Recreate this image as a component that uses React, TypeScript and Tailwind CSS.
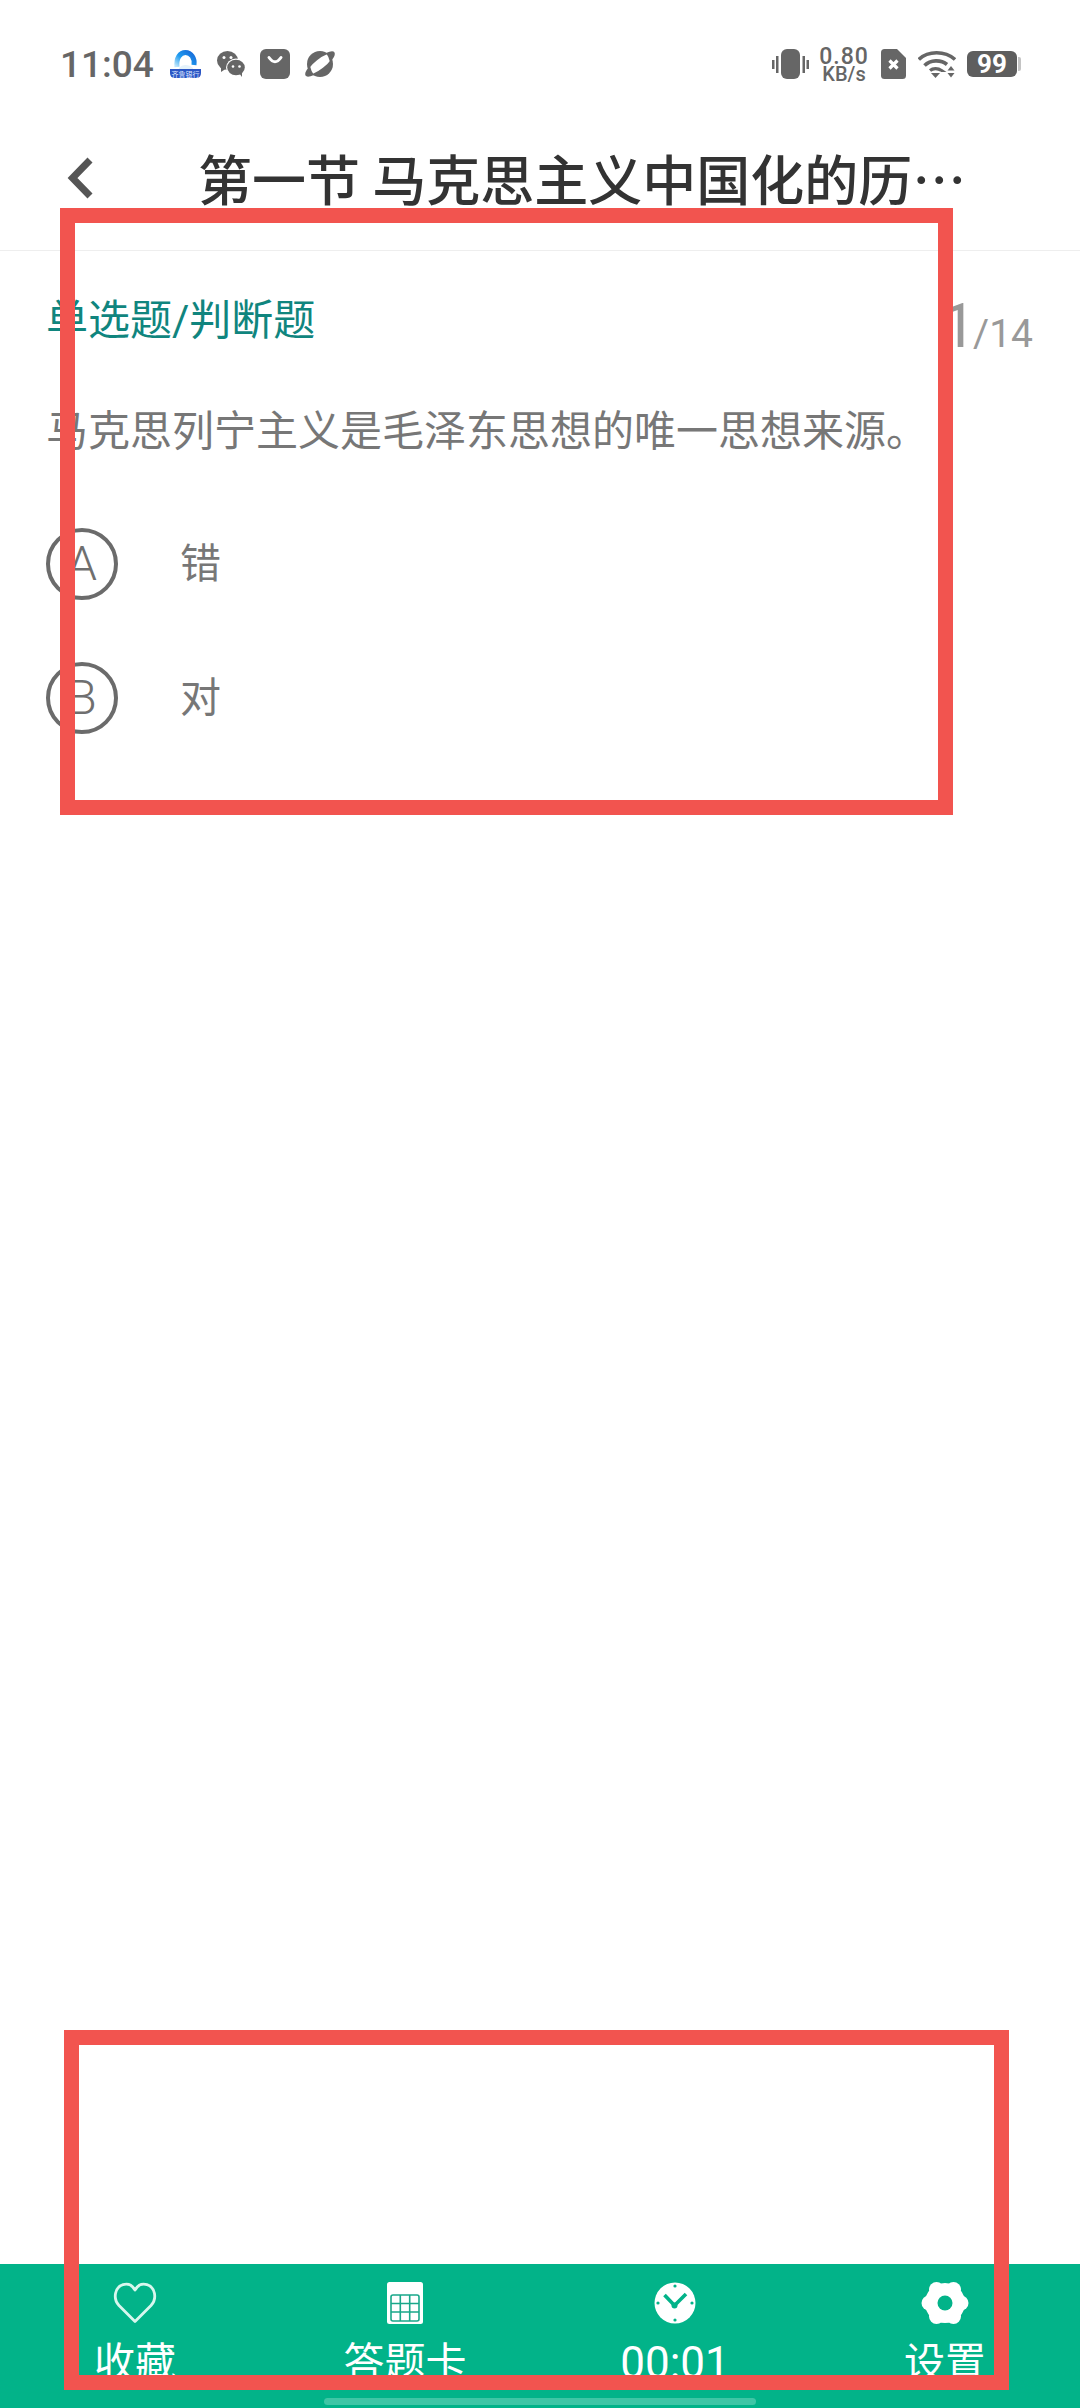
import React from "react";

function Option({ letter, text }: { letter: string; text: string }) {
  return (
    <div className="flex items-center h-[72px]">
      <div className="w-[72px] h-[72px] rounded-full border-[4.5px] border-[#6b6b6b] flex items-center justify-center text-[48px] font-light text-[#6f6f6f] font-['Roboto',sans-serif]">
        {letter}
      </div>
      <div className="ml-[62px] text-[41px] leading-[56px] text-[#777]">{text}</div>
    </div>
  );
}

function BlueIcon() {
  return (
    <svg width="31" height="28" viewBox="0 0 31 28">
      <defs>
        <linearGradient id="arc" x1="0" y1="1" x2="1" y2="0">
          <stop offset="0" stopColor="#bfe6fb" />
          <stop offset="0.45" stopColor="#1f9bef" />
          <stop offset="1" stopColor="#1668d8" />
        </linearGradient>
      </defs>
      <path d="M7 17 C6 8 10 2.5 15.5 2.5 C21 2.5 25 8 24 15" fill="none" stroke="url(#arc)" strokeWidth="5" />
      <path d="M9 18 C12 14 19 14 23 18 L23 20 L9 20Z" fill="#e4f2fb" />
      <path d="M0 19 H31 V23 Q31 28 26 28 H5 Q0 28 0 23Z" fill="#2a55c4" />
      <text x="15.5" y="26.5" textAnchor="middle" fontSize="7" fill="#dfe8ff" fontFamily="'Noto Sans CJK SC',sans-serif">齐鲁银行</text>
    </svg>
  );
}

function WeChatIcon() {
  return (
    <svg width="28" height="26" viewBox="0 0 28 26" fill="#666">
      <ellipse cx="10.5" cy="9.5" rx="10.5" ry="9.5" />
      <path d="M4 15 L4 21 L10 17Z" />
      <ellipse cx="19" cy="16.5" rx="10" ry="9" fill="#fff" />
      <ellipse cx="19" cy="16.5" rx="8.8" ry="7.8" />
      <path d="M22 22 L25 26 L25 20Z" />
      <circle cx="7" cy="6.5" r="1.5" fill="#fff" />
      <circle cx="14" cy="6.5" r="1.5" fill="#fff" />
      <circle cx="16" cy="15.5" r="1.3" fill="#fff" />
      <circle cx="22.5" cy="15.5" r="1.3" fill="#fff" />
    </svg>
  );
}

function BagIcon() {
  return (
    <svg width="30" height="30" viewBox="0 0 30 30">
      <rect width="30" height="30" rx="6" fill="#666" />
      <path d="M9 8.5 Q15 17 21 8.5" fill="none" stroke="#fff" strokeWidth="3" strokeLinecap="round" />
    </svg>
  );
}

function PlanetIcon() {
  return (
    <svg width="30" height="28" viewBox="0 0 30 28">
      <circle cx="15" cy="14" r="13" fill="#666" />
      <ellipse cx="15" cy="14" rx="15.5" ry="4.8" fill="#fff" transform="rotate(-38 15 14)" />
      <path d="M21 3 Q28 0 29.5 2.5 Q31 6 25 12 Q24 7 21 3Z" fill="#666" />
      <path d="M9 25 Q2 28 0.5 25.5 Q-1 22 5 16 Q6 21 9 25Z" fill="#666" />
    </svg>
  );
}

function VibrateIcon() {
  return (
    <svg width="37" height="30" viewBox="0 0 37 30" fill="#666">
      <rect x="9" y="0" width="19" height="30" rx="6" />
      <rect x="0" y="11" width="2.5" height="9" />
      <rect x="4" y="7" width="2.5" height="17" />
      <rect x="30.5" y="7" width="2.5" height="17" />
      <rect x="34.5" y="11" width="2.5" height="9" />
    </svg>
  );
}

function SimIcon() {
  return (
    <svg width="25" height="30" viewBox="0 0 25 30">
      <path d="M3.5 0 H16 L25 9 V26.5 Q25 30 21.5 30 H3.5 Q0 30 0 26.5 V3.5 Q0 0 3.5 0Z" fill="#666" />
      <path d="M8.5 11.5 L16.5 19.5 M16.5 11.5 L8.5 19.5" stroke="#fff" strokeWidth="3.2" />
    </svg>
  );
}

function WifiIcon() {
  return (
    <svg width="38" height="28" viewBox="0 0 38 28" fill="none">
      <path d="M0.8 9.5 C10 0.5 27 0.5 37 9.5" stroke="#666" strokeWidth="3.6" />
      <path d="M6.5 15.5 C12.5 9.5 23 9.5 29 14.5" stroke="#666" strokeWidth="3.6" />
      <path d="M12 20.5 C15 18 20 18 23.5 20.5 L23 20.5" stroke="#666" strokeWidth="3.2" />
      <path d="M13 23 H22 L17.5 28Z" fill="#666" />
      <path d="M33 16 L36.5 20.5 H29.5Z" fill="#666" />
      <path d="M29.5 23 H36.5 L33 27.5Z" fill="#666" />
    </svg>
  );
}

function HeartIcon() {
  return (
    <svg width="44" height="42" viewBox="0 0 44 42" fill="none">
      <path
        d="M22 39.5 L6 23.5 C-0.5 16.5 2 5 10 2.7 C15 1.3 19.5 3.5 22 8 C24.5 3.5 29 1.3 34 2.7 C42 5 44.5 16.5 38 23.5 Z"
        stroke="#d8f7ee"
        strokeWidth="2.8"
        strokeLinejoin="round"
      />
    </svg>
  );
}

function TableIcon() {
  return (
    <svg width="36" height="42" viewBox="0 0 36 42" fill="none">
      <rect width="36" height="42" rx="2.5" fill="#fff" />
      <rect x="4" y="13" width="28" height="26" rx="2" stroke="#1aa88a" strokeWidth="1.6" />
      <path d="M13.3 13 V39 M22.7 13 V39 M4 21.5 H32 M4 30 H32" stroke="#1aa88a" strokeWidth="1.6" />
    </svg>
  );
}

function ClockIcon() {
  return (
    <svg width="42" height="42" viewBox="0 0 42 42">
      <circle cx="21" cy="21" r="20.5" fill="#fff" />
      <path d="M10.5 13 L20.5 23.5 L32 12" fill="none" stroke="#02b389" strokeWidth="3.6" />
      <circle cx="20.5" cy="23.5" r="3" fill="#02b389" />
      <circle cx="21" cy="4" r="1.6" fill="#02b389" />
      <circle cx="21" cy="38" r="1.6" fill="#02b389" />
      <circle cx="4" cy="21" r="1.6" fill="#02b389" />
      <circle cx="38" cy="21" r="1.6" fill="#02b389" />
    </svg>
  );
}

function GearIcon() {
  return (
    <svg width="48" height="46" viewBox="0 0 48 46">
      <g fill="#fff">
        <circle cx="24" cy="23" r="20" />
        <circle cx="40" cy="23" r="7.5" />
        <circle cx="8" cy="23" r="7.5" />
        <circle cx="32.5" cy="9.5" r="7.5" />
        <circle cx="15.5" cy="9.5" r="7.5" />
        <circle cx="32.5" cy="36.5" r="7.5" />
        <circle cx="15.5" cy="36.5" r="7.5" />
      </g>
      <circle cx="24" cy="23" r="7.5" fill="#02b389" />
    </svg>
  );
}

function BarItem({ icon, label, labelClass }: { icon: React.ReactNode; label: string; labelClass?: string }) {
  return (
    <div className="w-[160px] flex flex-col items-center">
      <div className="h-[46px] flex items-center justify-center">{icon}</div>
      <div className={"mt-[13px] leading-[48px] text-white whitespace-nowrap " + (labelClass ?? "text-[41px]")}>{label}</div>
    </div>
  );
}

export default function App() {
  return (
    <div className="relative w-[1080px] h-[2408px] bg-white overflow-hidden flex flex-col font-['Roboto','Noto_Sans_CJK_SC',sans-serif]">
      <div className="h-[100px] shrink-0 pt-[28px] pl-[60px] pr-[63px] flex items-center">
        <div className="text-[37px] leading-none font-medium text-[#666] w-[92px] whitespace-nowrap">11:04</div>
        <div className="ml-[18px] flex items-center"><BlueIcon /></div>
        <div className="ml-[16px] flex items-center"><WeChatIcon /></div>
        <div className="ml-[15px] flex items-center"><BagIcon /></div>
        <div className="ml-[15px] flex items-center"><PlanetIcon /></div>
        <div className="ml-auto flex items-center"><VibrateIcon /></div>
        <div className="ml-[10px] w-[50px] flex flex-col items-center text-[#666] font-medium">
          <div className="text-[23px] leading-[20px] tracking-[1px]">0.80</div>
          <div className="text-[20px] leading-[15px]">KB/s</div>
        </div>
        <div className="ml-[12px] flex items-center"><SimIcon /></div>
        <div className="ml-[12px] flex items-center"><WifiIcon /></div>
        <div className="ml-[11px] relative w-[50px] h-[26px] rounded-[6px] bg-[#5e5e5e] flex items-center justify-center text-white text-[26px] font-bold leading-none">
          99
          <div className="absolute right-[-4px] top-[6px] w-[3px] h-[14px] rounded-r-[2px] bg-[#c4c4c4]" />
        </div>
      </div>

      <div className="h-[151px] shrink-0 border-b border-[#eeeeee] pt-[56px] pb-[50px] pl-[66px] flex items-center">
        <svg width="28" height="42" viewBox="0 0 28 42" fill="none" className="shrink-0">
          <path d="M24 3 L6.5 21 L24 39" stroke="#555" strokeWidth="7" />
        </svg>
        <div className="ml-[104px] text-[54px] leading-[60px] font-medium text-[#333] whitespace-nowrap font-['Noto_Sans_CJK_SC',sans-serif]">
          第一节 马克思主义中国化的历…
        </div>
      </div>

      <div className="flex-1 pl-[46px] pr-[47px]">
        <div className="flex justify-between items-start pt-[42px]">
          <div className="text-[42px] leading-[56px] text-[#10857e]">单选题/判断题</div>
          <div className="flex items-baseline text-[#999] leading-none pt-[2px]">
            <span className="text-[62px]">1</span>
            <span className="text-[39px] -ml-[3px]">/14</span>
          </div>
        </div>
        <div className="mt-[47px] text-[42px] leading-[56px] text-[#777] whitespace-nowrap">
          马克思列宁主义是毛泽东思想的唯一思想来源。
        </div>
        <div className="mt-[68px] flex flex-col gap-[62px]">
          <Option letter="A" text="错" />
          <Option letter="B" text="对" />
        </div>
      </div>

      <div className="relative h-[144px] shrink-0 bg-[#02b389] pt-[16px] pl-[55px] flex items-start gap-[110px]">
        <BarItem icon={<HeartIcon />} label="收藏" />
        <BarItem icon={<TableIcon />} label="答题卡" />
        <BarItem icon={<ClockIcon />} label="00:01" labelClass="text-[44px]" />
        <BarItem icon={<GearIcon />} label="设置" />
        <div className="absolute left-[324px] bottom-[3px] w-[432px] h-[7px] rounded-full bg-[#3fc6a6]" />
      </div>

      <div className="absolute left-[60px] top-[208px] w-[893px] h-[607px] border-[15px] border-[#f2544f]" />
      <div className="absolute left-[64px] top-[2030px] w-[945px] h-[360px] border-[15px] border-[#f2544f]" />
    </div>
  );
}
